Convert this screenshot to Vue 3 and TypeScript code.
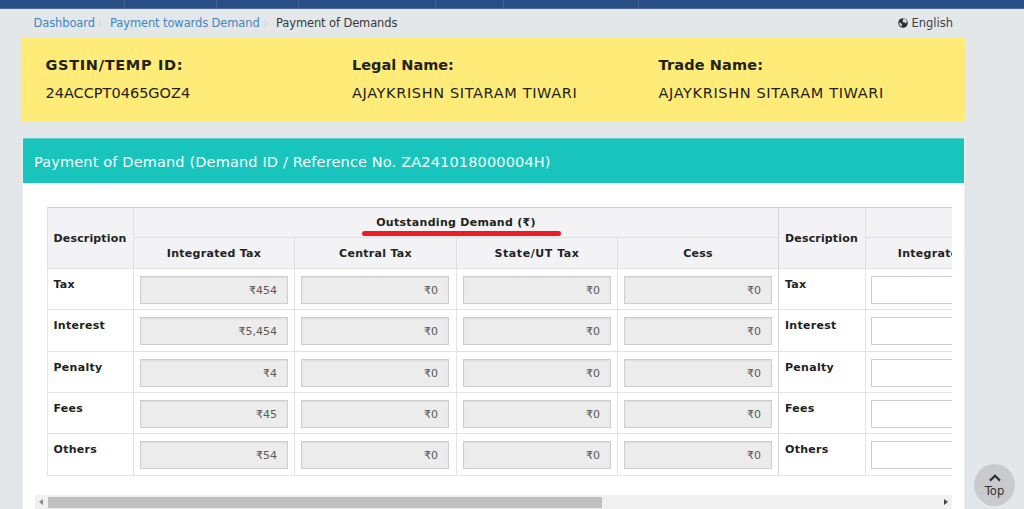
<script setup lang="ts">
interface DemandRow {
  label: string
  amounts: string[]
}

const identity = [
  { id: 'gstin', label: 'GSTIN/TEMP ID:', value: '24ACCPT0465GOZ4' },
  { id: 'legal', label: 'Legal Name:', value: 'AJAYKRISHN SITARAM TIWARI' },
  { id: 'trade', label: 'Trade Name:', value: 'AJAYKRISHN SITARAM TIWARI' },
]

const taxHeads = ['Integrated Tax', 'Central Tax', 'State/UT Tax', 'Cess']

const rows: DemandRow[] = [
  { label: 'Tax', amounts: ['₹454', '₹0', '₹0', '₹0'] },
  { label: 'Interest', amounts: ['₹5,454', '₹0', '₹0', '₹0'] },
  { label: 'Penalty', amounts: ['₹4', '₹0', '₹0', '₹0'] },
  { label: 'Fees', amounts: ['₹45', '₹0', '₹0', '₹0'] },
  { label: 'Others', amounts: ['₹54', '₹0', '₹0', '₹0'] },
]
</script>

<template>
  <div class="page">
    <nav class="navbar">
      <i class="tab t1"></i><i class="tab t2"></i><i class="tab t3"></i><i class="tab t4"></i><i class="tab t5"></i><i class="tab t6"></i>
    </nav>

    <header class="crumbs">
      <div class="trail">
        <a class="c1">Dashboard</a>
        <svg class="sep" viewBox="0 0 4 7"><path d="M.7 .7 3 3.5 .7 6.3" /></svg>
        <a class="c2">Payment towards Demand</a>
        <svg class="sep" viewBox="0 0 4 7"><path d="M.7 .7 3 3.5 .7 6.3" /></svg>
        <span class="c3">Payment of Demands</span>
      </div>
      <div class="lang">
        <svg class="globe" viewBox="0 0 10 10">
          <circle cx="5" cy="5" r="4.8" fill="#2b2d30" />
          <path d="M4.7 1 6.3 .6 8.5 2 9 4.2 7.5 5.6 6.5 4.2 5 4.3 4.3 3.2 5.2 2.3Z" fill="#d3d6d9" />
          <path d="M1 4.2 2.6 5 4.2 6.2 3.8 8.2 3 8.7 1.3 7Z" fill="#c8cbce" />
        </svg>
        <span>English</span>
      </div>
    </header>

    <section class="identity">
      <div v-for="item in identity" :key="item.id" :class="item.id">
        <div class="name">{{ item.label }}</div>
        <div class="value">{{ item.value }}</div>
      </div>
    </section>

    <main class="card">
      <h1>Payment of Demand (Demand ID / Reference No. ZA241018000004H)</h1>
      <div class="scroller">
        <div class="table">
          <div class="cell head desc">Description</div>
          <div class="cell head group">
            <span>Outstanding Demand (₹)</span><i class="mark"></i>
          </div>
          <div class="cell head desc second">Description</div>
          <div class="cell head"></div>
          <div v-for="h in taxHeads" :key="h" class="cell head" :class="{ wide: h.includes('/') }">{{ h }}</div>
          <div class="cell head paid">Integrated Tax</div>
          <template v-for="r in rows" :key="r.label">
            <div class="cell label">{{ r.label }}</div>
            <div v-for="(a, i) in r.amounts" :key="i" class="cell"><div class="box">{{ a }}</div></div>
            <div class="cell label second">{{ r.label }}</div>
            <div class="cell last"><div class="box open"></div></div>
          </template>
        </div>
      </div>
      <div class="scrollbar">
        <svg viewBox="0 0 4 6"><path d="M4 0v6L0 3z" fill="#8b8b8b" /></svg>
        <div class="track"><div class="thumb"></div></div>
        <svg viewBox="0 0 4 6"><path d="M0 0v6l4-3z" fill="#484848" /></svg>
      </div>
    </main>

    <button class="top">
      <svg viewBox="0 0 12 8"><path d="M1 6.6 6 1.8l5 4.8" /></svg>
      <span>Top</span>
    </button>
  </div>
</template>

<style>
body { margin: 0; overflow: hidden; }
</style>

<style scoped>
* { box-sizing: border-box; }
.page {
  position: relative;
  width: 1024px;
  height: 509px;
  overflow: hidden;
  background: #e3e7ea;
  color: #222;
  font: 12px "DejaVu Sans", Verdana, sans-serif;
  white-space: nowrap;
}
.navbar { display: flex; height: 9px; background: #2a4e86; border-bottom: 1px solid #4a6794; }
.tab { border-right: 1px solid #45618e; }
.t1 { width: 125px; }
.t2 { width: 92px; }
.t3 { width: 82px; }
.t4 { width: 137px; }
.t5 { width: 68px; }
.t6 { width: 135px; }
.crumbs { display: flex; justify-content: space-between; height: 29px; padding: 0 71px 1px 33.5px; line-height: 28px; }
.trail, .lang { display: flex; align-items: center; }
.trail a { color: #4186bf; }
.trail { font-size: 11.5px; letter-spacing: -0.12px; }
.c1 { width: 64.5px; }
.c2 { width: 154px; }
.c3 { color: #37393b; }
.sep { flex: none; width: 4px; height: 7px; margin-right: 8px; fill: none; stroke: #c5c9cc; }
.lang { color: #414346; font-size: 11.5px; }
.globe { width: 10px; height: 10px; margin-right: 3px; }
.identity {
  display: grid;
  grid-template-columns: 306.5px 306.5px 1fr;
  width: 943.5px;
  height: 82.5px;
  margin-left: 22px;
  padding: 14px 0 0 23.5px;
  background: #ffec78;
  font-size: 14.5px;
  line-height: 27.5px;
}
.name { font-weight: bold; }
.gstin .name { letter-spacing: 0.68px; }
.trade .name { letter-spacing: 0.14px; }
.legal .value, .trade .value { letter-spacing: 0.63px; }
.card {
  width: 943px;
  height: 371px;
  margin: 17.5px 0 0 22px;
  background: #fff;
  border: solid #eceeef;
  border-width: 0 1px;
}
h1 {
  margin: 0;
  padding-left: 11px;
  height: 45px;
  background: #19c4bc;
  border-top: 1px solid #5fd3ce;
  color: #f3fffe;
  font-size: 14.5px;
  font-weight: normal;
  letter-spacing: 0.15px;
  line-height: 46px;
}
.scroller { height: 269px; margin: 24px 12px 0 24px; overflow: hidden; }
.table {
  display: grid;
  grid-template-columns: 86px 161px 162px 161px 161px 87px 161px;
  grid-template-rows: 30px 31px 41px 42px 41px 41px 43px;
  width: 979px;
}
.cell { border: solid #e3e3e4; border-width: 1px 0 0 1px; padding: 7px 6px 0; }
.label, .head { font-weight: bold; font-size: 11px; letter-spacing: 0.28px; }
.cell.label { padding: 8px 0 0 5.5px; line-height: 16px; }
.label.second { padding-left: 6px; }
.cell:nth-last-child(-n + 7) { border-bottom-width: 1px; }
.head { display: flex; align-items: center; justify-content: center; padding: 0; background: #f3f3f5; border-color: #e0e0e2; }
.head.paid { padding-right: 2px; }
.desc { grid-row: span 2; padding-right: 1px; letter-spacing: 0.15px; }
.wide { letter-spacing: 0.55px; }
.group { grid-column: span 4; position: relative; }
.desc, .group, .desc + .head { border-top-color: #cfd0d4; }
.second { border-left-color: #d5d5d7; }
.mark { position: absolute; left: 228px; top: 23px; width: 199px; height: 5px; border-radius: 3px; background: #ed1c24; }
.box {
  width: 148px;
  height: 28px;
  padding-right: 10px;
  background: #ececec;
  border: 1px solid #cdcdcd;
  box-shadow: inset 0 1px 1px #dedede;
  color: #5a5a5a;
  font-size: 11px;
  line-height: 28px;
  text-align: right;
}
.last { padding-left: 5px; }
.open { background: #fff; box-shadow: none; }
.scrollbar { display: flex; align-items: center; width: 917px; height: 14px; margin: 19px 0 0 12px; padding: 0 4px; background: #f0f0f0; }
.scrollbar svg { width: 4px; height: 6px; }
.track { flex: 1; padding-left: 5px; }
.thumb { width: 554px; height: 11px; background: #c0c0c0; }
.top {
  position: absolute;
  left: 974px;
  top: 464px;
  display: flex;
  flex-direction: column;
  align-items: center;
  width: 41px;
  height: 42px;
  padding: 10px 0 0;
  border: 0;
  border-radius: 50%;
  background: #c9cacb;
  color: #303030;
  font: 11.5px/14px "DejaVu Sans", sans-serif;
}
.top svg { width: 12px; height: 8px; margin-bottom: 2px; fill: none; stroke: #303030; stroke-width: 2.2; }
</style>
